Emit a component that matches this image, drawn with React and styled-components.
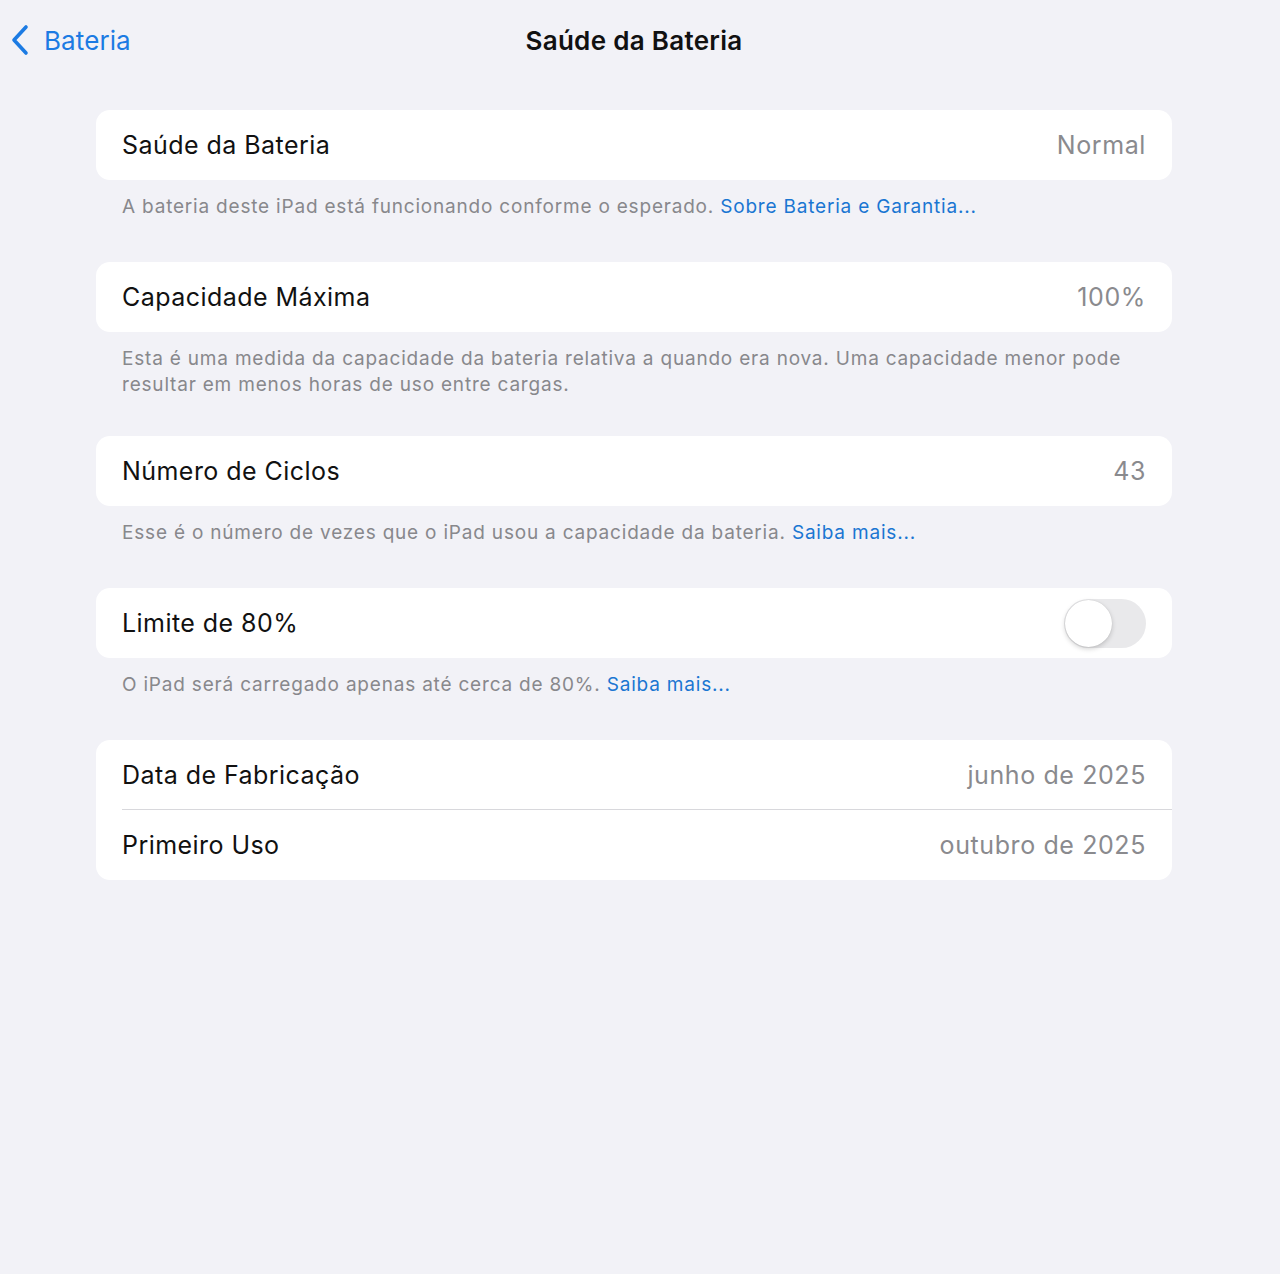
import styled, { createGlobalStyle } from 'styled-components';

const GlobalStyle = createGlobalStyle`
  html, body {
    margin: 0;
    padding: 0;
    background: #f2f2f7;
  }
  body {
    font-family: Inter, "Noto Sans", sans-serif;
    -webkit-font-smoothing: antialiased;
  }
`;

const Page = styled.div`
  min-height: 1274px;
  background: #f2f2f7;
`;

const NavBar = styled.div`
  display: grid;
  grid-template-columns: 1fr auto 1fr;
  align-items: center;
  height: 82px;
  padding: 0 10px;
`;

const BackButton = styled.div`
  display: flex;
  align-items: center;
  gap: 14px;
  color: #1c7be3;
  font-size: 26px;
  letter-spacing: 0.1px;
  margin-top: -2px;
`;

const Title = styled.div`
  font-size: 26px;
  font-weight: 600;
  color: #111;
  letter-spacing: 0.3px;
  margin-top: -2px;
  margin-left: -12px;
`;

const Content = styled.div`
  width: 1076px;
  margin-left: 96px;
  padding-top: 28px;
`;

const Section = styled.div`
  margin-bottom: ${p => p.$gap || 42}px;
`;

const Card = styled.div`
  background: #fff;
  border-radius: 14px;
  overflow: hidden;
`;

const Row = styled.div`
  display: flex;
  align-items: center;
  justify-content: space-between;
  height: 70px;
  padding: 0 26px;
  position: relative;
  ${p => p.$divider && `
    &::after {
      content: '';
      position: absolute;
      left: 26px;
      right: 0;
      bottom: 0;
      height: 1px;
      background: #d8d8dc;
    }
  `}
`;

const Label = styled.span`
  font-size: 25px;
  color: #111;
  letter-spacing: 0.45px;
`;

const Value = styled.span`
  font-size: 25px;
  color: #8a8a8e;
  letter-spacing: 0.6px;
`;

const Footer = styled.div`
  padding: 14px 26px 0;
  font-size: 19px;
  line-height: 26px;
  color: #88888c;
  letter-spacing: 0.8px;
`;

const Link = styled.span`
  color: #1a76d2;
`;

const Toggle = styled.div`
  width: 82px;
  height: 49px;
  border-radius: 25px;
  background: #e9e9eb;
  position: relative;
  flex-shrink: 0;
`;

const Knob = styled.div`
  position: absolute;
  left: 1px;
  top: 1px;
  width: 47px;
  height: 47px;
  border-radius: 50%;
  background: #fff;
  box-shadow: 0 2px 5px rgba(0, 0, 0, 0.18), 0 0 1px rgba(0, 0, 0, 0.15);
`;

const Chevron = () => (
  <svg width="20" height="32" viewBox="0 0 20 32" fill="none">
    <path d="M16 3 L4 16 L16 29" stroke="#1c7be3" strokeWidth="3.6" strokeLinecap="round" strokeLinejoin="round" />
  </svg>
);

export default function App() {
  return (
    <Page>
      <GlobalStyle />
      <NavBar>
        <BackButton>
          <Chevron />
          <span>Bateria</span>
        </BackButton>
        <Title>Saúde da Bateria</Title>
        <div />
      </NavBar>
      <Content>
        <Section>
          <Card>
            <Row>
              <Label>Saúde da Bateria</Label>
              <Value>Normal</Value>
            </Row>
          </Card>
          <Footer>
            A bateria deste iPad está funcionando conforme o esperado. <Link>Sobre Bateria e Garantia...</Link>
          </Footer>
        </Section>
        <Section $gap={38}>
          <Card>
            <Row>
              <Label>Capacidade Máxima</Label>
              <Value>100%</Value>
            </Row>
          </Card>
          <Footer>
            Esta é uma medida da capacidade da bateria relativa a quando era nova. Uma capacidade menor pode resultar em menos horas de uso entre cargas.
          </Footer>
        </Section>
        <Section>
          <Card>
            <Row>
              <Label>Número de Ciclos</Label>
              <Value>43</Value>
            </Row>
          </Card>
          <Footer>
            Esse é o número de vezes que o iPad usou a capacidade da bateria. <Link>Saiba mais...</Link>
          </Footer>
        </Section>
        <Section>
          <Card>
            <Row>
              <Label>Limite de 80%</Label>
              <Toggle>
                <Knob />
              </Toggle>
            </Row>
          </Card>
          <Footer>
            O iPad será carregado apenas até cerca de 80%. <Link>Saiba mais...</Link>
          </Footer>
        </Section>
        <Section>
          <Card>
            <Row $divider>
              <Label>Data de Fabricação</Label>
              <Value>junho de 2025</Value>
            </Row>
            <Row>
              <Label>Primeiro Uso</Label>
              <Value>outubro de 2025</Value>
            </Row>
          </Card>
        </Section>
      </Content>
    </Page>
  );
}
